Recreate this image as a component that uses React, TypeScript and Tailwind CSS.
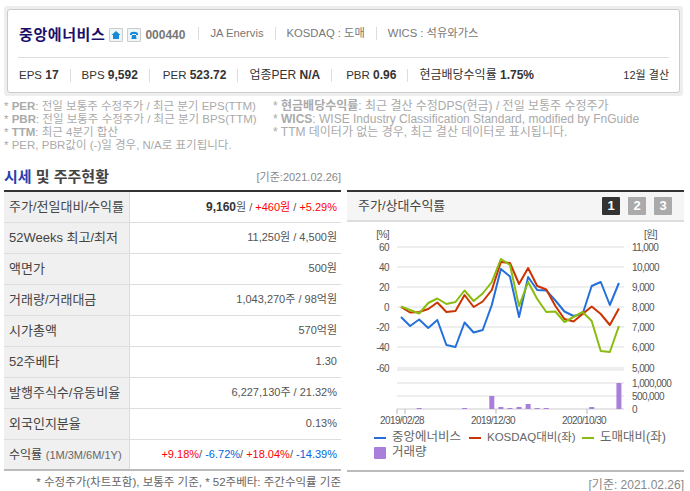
import React from 'react';

const FONT = 'font-["Liberation_Sans","Noto_Sans_CJK_KR",sans-serif]';

const BLUE = [-10, -19, -12.5, -21, -13, -38, -40, -15.5, -25.5, -23, 2, 38, 30.5, -10, 30, 17, 16.5, 6.5, -4.5, -9, -7, 21, 25, 2, 24];
const RED = [0, -5.5, -5, -2, 4.5, -5, -4, 12, 0, 5.5, 17, 45, 44, 23, 39, 21, 17.5, 1, -12, -14.5, -7, 0.5, -7, -18, -1.5];
const GREEN = [0.5, -3, -6.5, 4, 8.5, 3, 5, 16.5, 6, 13.5, 25, 48, 42, 1, 25, 8, -5, -4.5, -15, -10, -5, -14, -44, -45, -19];
const VOLUME: [number, number][] = [
  [2, 1], [7, 1], [10, 13], [11, 2], [12, 1], [13, 2], [14, 5], [15, 1], [16, 1], [21, 2], [24, 26],
];

const toPoints = (values: number[]) =>
  values.map((v, i) => `${401 - 347 + i * 9.08},${307 - 222 - v}`).join(' ');

const LEFT_AXIS = [
  ['60', 25],
  ['40', 45],
  ['20', 65],
  ['0', 85],
  ['-20', 105],
  ['-40', 125],
  ['-60', 146],
] as const;

const RIGHT_AXIS = [
  ['11,000', 25],
  ['10,000', 45],
  ['9,000', 65],
  ['8,000', 85],
  ['7,000', 105],
  ['6,000', 125],
  ['5,000', 146],
] as const;

const Sep = () => <span className="mx-[11px] inline-block h-[13px] w-px bg-[#dddddd] align-middle" />;

const Metric = ({ label, value, className = 'text-[11.5px]' }: { label: string; value: string; className?: string }) => (
  <span className={`whitespace-nowrap text-[#333333] ${className}`}>
    {label} <b className="text-[12px] text-[#333333]">{value}</b>
  </span>
);

const IconBox = ({ children }: { children: React.ReactNode }) => (
  <span className="ml-[4px] inline-flex h-[14px] w-[14px] items-center justify-center rounded-[1px] border border-[#cccccc] bg-[#eef5f9]">
    {children}
  </span>
);

const Note = ({ head, children }: { head?: string; children: React.ReactNode }) => (
  <div className="h-[13px] whitespace-nowrap leading-[13px]">
    *{' '}
    {head && <b className="text-[#aaaaaa]">{head}</b>}
    {children}
  </div>
);

const rows: [React.ReactNode, React.ReactNode][] = [
  [
    '주가/전일대비/수익률',
    <>
      <b className="text-[12px] text-[#333333]">9,160</b>원 /{' '}
      <span className="text-[#ff0000]">+460원</span> / <span className="text-[#ff0000]">+5.29%</span>
    </>,
  ],
  ['52Weeks 최고/최저', '11,250원 / 4,500원'],
  ['액면가', '500원'],
  ['거래량/거래대금', '1,043,270주 / 98억원'],
  ['시가총액', '570억원'],
  ['52주베타', '1.30'],
  ['발행주식수/유동비율', '6,227,130주 / 21.32%'],
  ['외국인지분율', '0.13%'],
  [
    <>
      <span className="text-[12px]">수익률</span> <span className="text-[11px] text-[#666666]">(1M/3M/6M/1Y)</span>
    </>,
    <>
      <span className="text-[#ff0000]">+9.18%</span>/ <span className="text-[#0066dd]">-6.72%</span>/{' '}
      <span className="text-[#ff0000]">+18.04%</span>/ <span className="text-[#0066dd]">-14.39%</span>
    </>,
  ],
];

const Chart = () => (
  <svg width="337" height="208" className="block" fontFamily="'Liberation Sans','Noto Sans CJK KR',sans-serif" fontSize="10" letterSpacing="-0.6" fill="#555555">
    <text x="42" y="16" textAnchor="end">[%]</text>
    <text x="297" y="16">[원]</text>
    {LEFT_AXIS.map(([label, y]) => (
      <g key={label}>
        <line x1="50" x2="277" y1={y} y2={y} stroke="#dddddd" />
        <text x="42" y={y + 4} textAnchor="end">{label}</text>
      </g>
    ))}
    {RIGHT_AXIS.map(([label, y]) => (
      <text key={label} x="285" y={y + 4}>{label}</text>
    ))}
    <line x1="50" x2="277" y1="148" y2="148" stroke="#dddddd" />
    <line x1="50" x2="277" y1="161" y2="161" stroke="#dddddd" />
    <line x1="50" x2="277" y1="174" y2="174" stroke="#dddddd" />
    <line x1="50" x2="277" y1="187" y2="187" stroke="#cccccc" />
    <text x="285" y="165">1,000,000</text>
    <text x="285" y="178">500,000</text>
    <text x="285" y="191">0</text>
    {[50, 58, 149, 240].map(x => (
      <line key={x} x1={x} x2={x} y1="187" y2="192" stroke="#bbbbbb" />
    ))}
    {VOLUME.map(([i, h]) => (
      <rect key={i} x={54 + i * 9.08 - 2.5} y={187 - h} width="5" height={h} fill="#a97fdb" />
    ))}
    <polyline points={toPoints(BLUE)} fill="none" stroke="#2470db" strokeWidth="2" strokeLinejoin="round" />
    <polyline points={toPoints(RED)} fill="none" stroke="#cc3300" strokeWidth="2" strokeLinejoin="round" />
    <polyline points={toPoints(GREEN)} fill="none" stroke="#8abb0f" strokeWidth="2" strokeLinejoin="round" />
    <text x="33" y="202">2019/02/28</text>
    <text x="124" y="202">2019/12/30</text>
    <text x="215" y="202">2020/10/30</text>
  </svg>
);

const Legend = ({ color, label, className }: { color: string; label: string; className: string }) => (
  <span className={`flex shrink-0 items-center whitespace-nowrap ${className}`}>
    <span className={`mr-[6px] h-[2px] w-[12px] ${color}`} />
    {label}
  </span>
);

export default function App() {
  return (
    <div className={`${FONT} h-[491px] w-[690px] overflow-hidden bg-white text-[12px] text-[#555555]`}>
      <div className="ml-[4px] mt-[6px] w-[679px] rounded-[3px] bg-[#eeeeee] p-[3px]">
        <div className="h-[84px] rounded-[3px] border border-[#cccccc] bg-white px-[10px]">
          <div className="flex h-[48px] items-center border-b border-[#dddddd] pt-[3px]">
            <h1 className="ml-[1px] text-[15px] font-bold tracking-[0.6px] text-[#1a0f6b]">중앙에너비스</h1>
            <IconBox>
              <svg width="10" height="10" viewBox="0 0 10 10">
                <path d="M5 1 0.5 5H2v4h6V5h1.5z" fill="#1689d6" />
              </svg>
            </IconBox>
            <IconBox>
              <svg width="10" height="10" viewBox="0 0 10 10">
                <path d="M1 4c0-3 8-3 8 0v1H7V4H3v1H1zM2.500 9 3 5h4l.5 4z" fill="#1689d6" />
              </svg>
            </IconBox>
            <b className="ml-[4px] text-[12px] text-[#777777]">000440</b>
            <div className="ml-[2px] flex items-center self-start pt-[12px] text-[11.25px] text-[#777777]">
              <Sep />
              <span>JA Enervis</span>
              <Sep />
              <span>KOSDAQ : 도매</span>
              <Sep />
              <span>WICS : 석유와가스</span>
            </div>
          </div>
          <div className="flex h-[34px] items-center justify-between">
            <div className="ml-[1px] flex items-center">
              <Metric label="EPS" value="17" />
              <Sep />
              <Metric label="BPS" value="9,592" />
              <Sep />
              <Metric label="PER" value="523.72" className="ml-[2px] text-[11.5px]" />
              <Sep />
              <Metric label="업종PER" value="N/A" className="text-[12px]" />
              <Sep />
              <Metric label="PBR" value="0.96" className="ml-[3px] text-[11.5px]" />
              <Sep />
              <Metric label="현금배당수익률" value="1.75%" className="text-[12px]" />
            </div>
            <span className="text-[11px] text-[#333333]">12월 결산</span>
          </div>
        </div>
      </div>

      <div className="ml-[4px] mt-[4px] flex text-[#aaaaaa]">
        <div className="w-[269px] text-[11.5px]">
          <Note head="PER">: 전일 보통주 수정주가 / 최근 분기 EPS(TTM)</Note>
          <Note head="PBR">: 전일 보통주 수정주가 / 최근 분기 BPS(TTM)</Note>
          <Note head="TTM">: 최근 4분기 합산</Note>
          <Note>PER, PBR값이 (-)일 경우, N/A로 표기됩니다.</Note>
        </div>
        <div>
          <Note head="현금배당수익률">: 최근 결산 수정DPS(현금) / 전일 보통주 수정주가</Note>
          <Note head="WICS">: WISE Industry Classification Standard, modified by FnGuide</Note>
          <Note>TTM 데이터가 없는 경우, 최근 결산 데이터로 표시됩니다.</Note>
        </div>
      </div>

      <div className="ml-[4px] mt-[9px] flex w-[680px] gap-[6px]">
        <div className="w-[337px]">
          <div className="flex h-[29px] items-center justify-between pt-[3px]">
            <h2 className="text-[15px] font-bold text-[#444444]">
              <span className="text-[#2b3fae]">시세</span> 및 주주현황
            </h2>
            <span className="text-[11px] text-[#888888]">[기준:2021.02.26]</span>
          </div>
          <table className="w-full table-fixed border-collapse border-t-2 border-b-2 border-t-[#333333] border-b-[#bbbbbb]">
            <tbody>
              {rows.map(([label, value], i) => (
                <tr key={i} className="h-[31px] border-b border-[#dddddd] last:border-b-0">
                  <th className="w-[125px] border-r border-[#dddddd] bg-[#f0f0f0] pl-[5px] text-left text-[13px] font-normal text-[#444444]">
                    {label}
                  </th>
                  <td className="pr-[4px] text-right text-[11px] text-[#555555]">{value}</td>
                </tr>
              ))}
            </tbody>
          </table>
          <div className="mt-[3px] whitespace-nowrap text-right text-[11.5px] text-[#666666]">* 수정주가(차트포함), 보통주 기준, * 52주베타: 주간수익률 기준</div>
        </div>

        <div className="w-[337px]">
          <div className="mt-[29px] flex h-[32px] items-center justify-between border-y-2 border-t-[#333333] border-b-[#dddddd] bg-[#f5f5f5] pl-[11px] pr-[12px] text-[13px] text-[#444444]">
            <span>주가/상대수익률</span>
            <div className="flex gap-[8px]">
              {['1', '2', '3'].map((n, i) => (
                <span
                  key={n}
                  className={`flex h-[18px] w-[18px] items-center justify-center rounded-[1px] text-[13px] font-bold text-white ${i === 0 ? 'bg-[#333333]' : 'bg-[#aaaaaa]'}`}
                >
                  {n}
                </span>
              ))}
            </div>
          </div>
          <Chart />
          <div className="flex h-[15px] items-center pl-[27px] text-[12.5px] text-[#666666]">
            <Legend color="bg-[#2470db]" label="중앙에너비스" className="w-[95px]" />
            <Legend color="bg-[#cc3300]" label="KOSDAQ대비(좌)" className="w-[113px] text-[11.5px]" />
            <Legend color="bg-[#8abb0f]" label="도매대비(좌)" className="w-[90px]" />
          </div>
          <div className="flex h-[15px] items-center pl-[27px] text-[12.5px] text-[#666666]">
            <span className="mr-[6px] h-[12px] w-[12px] rounded-[1px] bg-[#a97fdb]" />
            거래량
          </div>
          <div className="mt-[10px] border-t-2 border-[#bbbbbb] pt-[4px] text-right text-[#888888]">[기준: 2021.02.26]</div>
        </div>
      </div>
    </div>
  );
}
